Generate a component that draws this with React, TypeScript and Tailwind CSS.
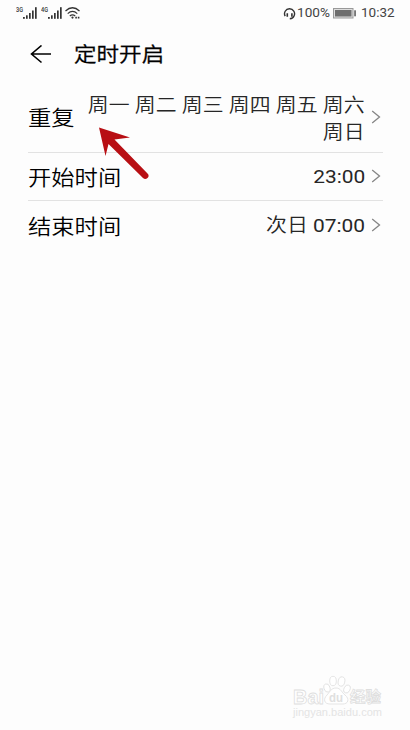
import React from 'react'

const SignalIcon: React.FC<{ label: string }> = ({ label }) => (
  <svg className="h-[14px] w-[22px]" viewBox="0 0 22 14" fill="#333">
    <text x="0" y="5.5" fontSize="6.5" fontWeight="500" textLength="7" lengthAdjust="spacingAndGlyphs">{label}</text>
    <rect x="7" y="11" width="1.8" height="1.8" />
    <rect x="10" y="9.3" width="1.7" height="3.5" />
    <rect x="13" y="7" width="1.7" height="5.8" />
    <rect x="16" y="4.5" width="1.7" height="8.3" />
    <rect x="19" y="1.2" width="1.7" height="11.6" />
  </svg>
)

const WifiIcon = () => (
  <svg className="h-[14px] w-[17px]" viewBox="0 0 17 14" fill="none" stroke="#333" strokeWidth="1.2">
    <path d="M0.5 5 Q7.5 -1.5 14.5 5" />
    <path d="M2.7 7.6 Q7.5 3.3 12.3 7.6" />
    <path d="M4.8 10 Q7.5 7.6 10.2 10" />
    <circle cx="7.5" cy="11.6" r="1.1" fill="#333" stroke="none" />
    <path d="M10.3 11.6h1.6M12.8 11.6h1.6" strokeWidth="1.8" />
  </svg>
)

const HeadsetIcon = () => (
  <svg className="h-[13px] w-[13px]" viewBox="0 0 13 13" fill="none" stroke="#333" strokeWidth="1.4">
    <path d="M2.2 9.2 A5 5 0 1 1 11 9 Q10.2 11.6 6.8 11.7" />
    <path d="M4.3 6.2v3.6M8.9 6.2v3.6" strokeWidth="1.6" />
  </svg>
)

const BatteryIcon = () => (
  <svg className="h-[11px] w-[24px]" viewBox="0 0 24 11">
    <rect x="0.5" y="0.5" width="19.5" height="9.5" fill="#ddd" stroke="#999" />
    <rect x="2" y="2" width="16.5" height="6.5" fill="#6e6e6e" />
    <rect x="21.3" y="2.3" width="1.5" height="6" fill="#555" />
  </svg>
)

const Chevron = () => (
  <svg className="mb-px ml-[6px] mr-px h-[14px] w-[11px]" viewBox="0 0 11 14" fill="none" stroke="#858585" strokeWidth="1.3">
    <path d="M1.2 1 L8.5 7 L1.2 13" />
  </svg>
)

interface RowProps {
  label: string
  value: React.ReactNode
  className: string
  valueClassName?: string
}

const Row: React.FC<RowProps> = ({ label, value, className, valueClassName = '' }) => (
  <div className={`flex items-center ${className}`}>
    <span className="origin-left scale-x-[1.11] whitespace-nowrap pt-[2px] text-[21px] leading-[28px] text-black">{label}</span>
    <span className={`ml-auto origin-right scale-x-[1.1] whitespace-nowrap text-right text-[19px] leading-[27px] text-[#262626] ${valueClassName}`}>
      {value}
    </span>
    <Chevron />
  </div>
)

const Watermark = () => (
  <svg
    className="absolute left-[290px] top-[673px] h-[48px] w-[96px] font-['Liberation_Sans','Noto_Sans_CJK_SC',sans-serif]"
    viewBox="0 0 96 48"
    fill="#fff"
    stroke="#dedede"
    strokeWidth="0.8"
  >
    <text x="3" y="31" fontSize="20" fontWeight="bold" textLength="31" lengthAdjust="spacingAndGlyphs">Bai</text>
    <ellipse cx="37" cy="15" rx="3" ry="4.2" transform="rotate(-18 37 15)" />
    <ellipse cx="43" cy="8" rx="3.3" ry="4.7" />
    <ellipse cx="51.5" cy="8.5" rx="3.3" ry="4.7" transform="rotate(12 51.5 8.5)" />
    <ellipse cx="57" cy="16" rx="3" ry="4.2" transform="rotate(25 57 16)" />
    <path d="M46 15 C51 15 52 20 55 22 C60 26 58 31 53 31 H40 C34 31 33 26 37 22 C40 19 41 15 46 15Z" />
    <text x="39" y="29" fontSize="12" fontWeight="bold" textLength="14" lengthAdjust="spacingAndGlyphs" fill="#e0e0e0" stroke="none">du</text>
    <text x="60" y="29" fontSize="15" fontWeight="bold" textLength="31" lengthAdjust="spacingAndGlyphs">经验</text>
    <text x="3" y="43" fontSize="10" textLength="89" lengthAdjust="spacingAndGlyphs" fill="#e4e4e4" stroke="none">jingyan.baidu.com</text>
  </svg>
)

export default function App() {
  return (
    <div className="relative h-[730px] w-[410px] overflow-hidden bg-[#fdfdfd] font-['Roboto','Noto_Sans_CJK_SC_DemiLight','Noto_Sans_CJK_SC_Light','Noto_Sans_CJK_SC',sans-serif]">
      <header className="flex h-[26px] items-center pl-4 pr-[15px] text-[#444]">
        <SignalIcon label="3G" />
        <div className="ml-[3px] flex">
          <SignalIcon label="4G" />
        </div>
        <div className="ml-[2px] flex">
          <WifiIcon />
        </div>
        <div className="ml-auto flex items-center">
          <HeadsetIcon />
          <span className="ml-px w-[36px] origin-left scale-x-[1.09] text-[12.5px]">100%</span>
          <BatteryIcon />
          <span className="ml-1 w-[34px] origin-left scale-x-[1.08] text-[12.5px]">10:32</span>
        </div>
      </header>

      <div className="flex h-[56px] items-center pl-[30px]">
        <svg className="h-[19px] w-[22px]" viewBox="0 0 22 19" fill="none" stroke="#000" strokeWidth="1.6">
          <path d="M21 9H1.5M11.5 0.5L1.5 9L11.5 17.5" />
        </svg>
        <h1 className="ml-[22px] origin-left scale-x-[1.1] pt-[2px] text-[20.5px] text-black [-webkit-text-stroke:0.3px]">定时开启</h1>
      </div>

      <main className="ml-7 mr-[27px] divide-y divide-[#e2e2e2]">
        <Row
          label="重复"
          value={<>周一 周二 周三 周四 周五 周六<br />周日</>}
          className="h-[71px]"
          valueClassName="pt-[3px]"
        />
        <Row label="开始时间" value="23:00" className="h-[48px]" />
        <Row label="结束时间" value="次日 07:00" className="h-[49px]" />
      </main>

      {/* pointer to the repeat setting */}
      <svg className="absolute left-[98px] top-[126px] h-[54px] w-[52px]" viewBox="0 0 52 54">
        <path d="M1 1.5 L32 11.5 L16.5 13.5 L49.5 47.5 A3 3 0 0 1 45 52 L10.5 18 L7.5 30Z" fill="#b80f14" />
      </svg>

      <Watermark />
    </div>
  )
}
